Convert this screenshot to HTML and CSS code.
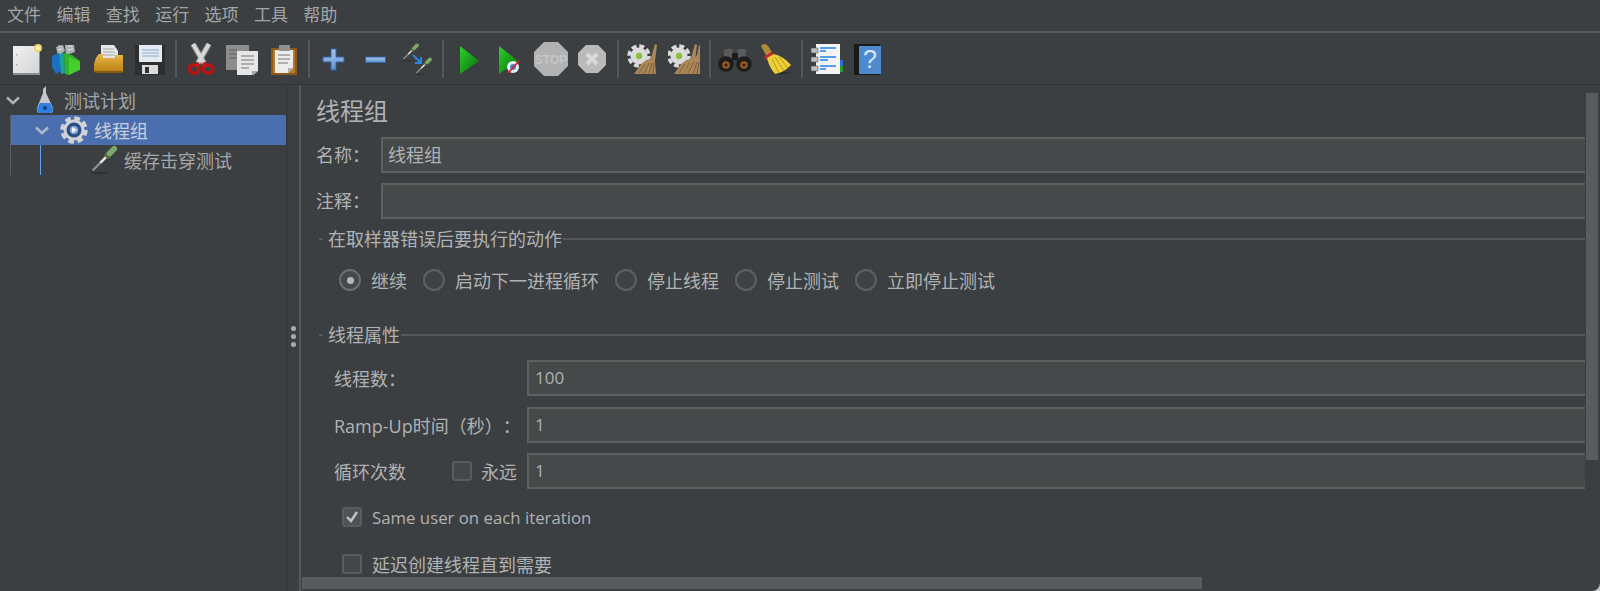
FILE: index.html
```html
<!DOCTYPE html>
<html lang="zh-CN">
<head>
    <meta charset="UTF-8">
    <meta name="viewport" content="width=device-width, initial-scale=1.0">
    <title>线程组</title>
    <link rel="stylesheet" href="styles.css">
</head>
<body>
    <svg class="defs" width="0" height="0">
        <defs>
            <linearGradient id="playFill" x1="0" y1="0" x2="1" y2="1">
                <stop offset="0" stop-color="#2fd02f"/>
                <stop offset="1" stop-color="#066f06"/>
            </linearGradient>
            <linearGradient id="folderFill" x1="0" y1="0" x2="0" y2="1">
                <stop offset="0" stop-color="#e8b84a"/>
                <stop offset="1" stop-color="#b87c10"/>
            </linearGradient>
            <linearGradient id="plusFill" x1="0" y1="0" x2="0" y2="1">
                <stop offset="0" stop-color="#a9c8ec"/>
                <stop offset="1" stop-color="#5f92d0"/>
            </linearGradient>
            <linearGradient id="pageFill" x1="0" y1="0" x2="1" y2="1">
                <stop offset="0" stop-color="#f2f2f2"/>
                <stop offset="1" stop-color="#d4d4d4"/>
            </linearGradient>
            <symbol id="dropper" viewBox="0 0 32 32">
                <ellipse cx="11" cy="30" rx="9" ry="1.4" fill="#2f3132"/>
                <path d="M3 28 L20 11" stroke="#3a3a3a" stroke-width="5"/>
                <path d="M4 27 L12 19" stroke="#8c8c8c" stroke-width="2.6"/>
                <path d="M12 19 L20 11" stroke="#e4e4e4" stroke-width="2.8"/>
                <path d="M18 13 L23 8" stroke="#4d6b3e" stroke-width="6.5"/>
                <path d="M22 9 L27 4" stroke="#7fa868" stroke-width="6" stroke-linecap="round"/>
            </symbol>
            <symbol id="broomGear" viewBox="0 0 32 32">
                <circle cx="12" cy="13" r="8.5" fill="#dcdcdc"/>
                <circle cx="12" cy="13" r="10" fill="none" stroke="#dcdcdc" stroke-width="3.5" stroke-dasharray="5 2.85"/>
                <circle cx="12" cy="13" r="3.2" fill="#8fc03f"/>
                <path d="M7 31 L15 20 L24 15 L28 1 L30 2 L28 18 L29 31 Z" fill="#ab8758"/>
                <path d="M12 30 L18 21 M17 31 L22 20 M22 31 L25 20 M26 31 L27 20" stroke="#7d5e38" stroke-width="1"/>
            </symbol>
        </defs>
    </svg>

    <div class="window">
        <nav class="menu-bar">
            <span class="menu-item">文件</span>
            <span class="menu-item">编辑</span>
            <span class="menu-item">查找</span>
            <span class="menu-item">运行</span>
            <span class="menu-item">选项</span>
            <span class="menu-item">工具</span>
            <span class="menu-item">帮助</span>
        </nav>

        <div class="toolbar">
            <!-- new -->
            <span class="tool"><svg viewBox="0 0 32 32" width="32" height="32">
                <rect x="3" y="3" width="27" height="29" fill="#8d8d8d"/>
                <rect x="3" y="3" width="26" height="27" fill="url(#pageFill)"/>
                <rect x="6" y="11" width="1.5" height="1.5" fill="#aaa"/><rect x="6" y="21" width="1.5" height="1.5" fill="#aaa"/>
                <circle cx="28" cy="5" r="4" fill="#e8d66a"/><circle cx="28" cy="5" r="2" fill="#fff6c0"/>
            </svg></span>
            <!-- templates -->
            <span class="tool"><svg viewBox="5 0 32 32" width="32" height="32">
                <path d="M10 4 l7 -2 2 6 -7 5 z M19 2 l9 0 1 7 -9 3 z" fill="#a9b4b8"/>
                <path d="M12 3 l3 0 M22 3 l4 0 M12 7 l4 -1 M22 7 l5 -1" stroke="#dfe5e8" stroke-width="1.2"/>
                <path d="M6 13 l7 -3 2 18 -5 3 -4 -7 z" fill="#1d6fc0"/>
                <path d="M13 11 l5 -1 1 20 -4 1 z" fill="#1aa0a0"/>
                <path d="M18 10 l8 2 8 6 0 9 -11 5 -4 -1 z" fill="#2fb52a"/>
                <path d="M23 14 l11 5 0 7 -11 6 z" fill="#48cf2e"/>
            </svg></span>
            <!-- open -->
            <span class="tool"><svg viewBox="0 0 32 32" width="32" height="32">
                <path d="M8 2 h13 l4 6 v8 H8 z" fill="#e6e6e6"/>
                <path d="M10 6 h11 M10 9 h12 M10 12 h12" stroke="#aaa" stroke-width="1"/>
                <path d="M1 21 Q3 13 6 11 h4 v4 h12 v-3 h8 v16 q0 2 -2 2 H4 q-3 0 -3 -3 z" fill="url(#folderFill)"/>
                <path d="M2 29 h27" stroke="#6e4f10" stroke-width="1.5"/>
            </svg></span>
            <!-- save -->
            <span class="tool"><svg viewBox="0 0 32 32" width="32" height="32">
                <rect x="1" y="2" width="30" height="30" fill="#2e2e2e"/>
                <rect x="5" y="2" width="23" height="17" fill="#e4eaf2"/>
                <path d="M8 7 h17 M8 10 h17 M8 13 h17" stroke="#8aa9c9" stroke-width="1.2"/>
                <rect x="8" y="22" width="16" height="9" fill="#dcdcdc"/>
                <rect x="11" y="24" width="4" height="6" fill="#333"/>
            </svg></span>
            <span class="tool-sep"></span>
            <!-- cut -->
            <span class="tool"><svg viewBox="0 0 32 32" width="32" height="32">
                <path d="M8 1 L19 20 M24 1 L13 20" stroke="#7d7d7d" stroke-width="6"/>
                <path d="M8 1 L19 20 M24 1 L13 20" stroke="#d6d6d6" stroke-width="4"/>
                <ellipse cx="9" cy="26" rx="5" ry="4" fill="none" stroke="#b81414" stroke-width="3.4"/>
                <ellipse cx="23" cy="26" rx="5" ry="4" fill="none" stroke="#b81414" stroke-width="3.4"/>
                <path d="M14 20 l-3 3 M18 20 l3 3" stroke="#c81818" stroke-width="3.4"/>
            </svg></span>
            <!-- copy -->
            <span class="tool"><svg viewBox="0 0 32 32" width="32" height="32">
                <rect x="0" y="2" width="23" height="25" fill="#8d8d8d"/>
                <path d="M3 7 h8 M3 11 h8 M3 15 h8" stroke="#6d6d6d" stroke-width="1.5"/>
                <path d="M11 8 h21 v20 l-6 5 H11 z" fill="#e6e6e6"/>
                <path d="M15 13 h13 M15 17 h13 M15 21 h13 M15 25 h8" stroke="#9c9c9c" stroke-width="1.5"/>
                <path d="M26 33 v-5 h6 z" fill="#a8a8a8"/>
            </svg></span>
            <!-- paste -->
            <span class="tool"><svg viewBox="0 0 32 32" width="32" height="32">
                <rect x="3" y="5" width="26" height="27" fill="#8a5a1c"/>
                <rect x="5" y="7" width="22" height="23" fill="#b77a2c"/>
                <path d="M7 7 h18 v18 l-5 5 H7 z" fill="#ececec"/>
                <rect x="11" y="2" width="11" height="6" fill="#8f8f8f"/>
                <path d="M10 12 h12 M10 16 h12 M10 20 h10" stroke="#9c9c9c" stroke-width="1.3"/>
                <path d="M20 30 v-5 h5 z" fill="#b2b2b2"/>
            </svg></span>
            <span class="tool-sep"></span>
            <!-- expand -->
            <span class="tool"><svg viewBox="0 0 32 32" width="32" height="32">
                <path d="M13 6 h5 v8 h8 v5 h-8 v8 h-5 v-8 h-8 v-5 h8 z" fill="url(#plusFill)" stroke="#3065a8" stroke-width="1"/>
            </svg></span>
            <!-- collapse -->
            <span class="tool"><svg viewBox="0 0 32 32" width="32" height="32">
                <rect x="5.5" y="14" width="20" height="5.5" fill="url(#plusFill)" stroke="#3065a8" stroke-width="1"/>
            </svg></span>
            <!-- toggle -->
            <span class="tool"><svg viewBox="0 0 32 32" width="32" height="32">
                <use href="#dropper" x="0" y="0" width="19" height="19"/>
                <use href="#dropper" x="13" y="14" width="19" height="19"/>
                <path d="M12 12 L20 20 M20 14 v6 h-6" stroke="#2a86e6" stroke-width="2" fill="none"/>
            </svg></span>
            <span class="tool-sep"></span>
            <!-- start -->
            <span class="tool"><svg viewBox="0 0 32 32" width="32" height="32">
                <path d="M8 3 L27 18 L8 31 z" fill="url(#playFill)"/>
            </svg></span>
            <!-- start no pauses -->
            <span class="tool"><svg viewBox="0 0 32 32" width="32" height="32">
                <path d="M6 3 L25 18 L6 31 z" fill="url(#playFill)"/>
                <circle cx="20" cy="24" r="6" fill="#e6eef8"/>
                <circle cx="20" cy="24" r="3" fill="#4a86cf"/>
                <path d="M15 30 L26 18" stroke="#e02020" stroke-width="1.8"/>
            </svg></span>
            <!-- stop -->
            <span class="tool"><svg viewBox="0 0 34 34" width="34" height="34">
                <path d="M10 0 h14 l10 10 v14 l-10 10 h-14 l-10 -10 v-14 z" fill="#b2b2b2"/>
                <text x="17" y="22" class="stop-label">STOP</text>
            </svg></span>
            <!-- shutdown -->
            <span class="tool"><svg viewBox="0 0 32 32" width="32" height="32">
                <path d="M10 2 h12 l8 8 v12 l-8 8 h-12 l-8 -8 v-12 z" fill="#bababa"/>
                <path d="M11 11 L21 21 M21 11 L11 21" stroke="#dadada" stroke-width="4"/>
            </svg></span>
            <span class="tool-sep"></span>
            <!-- clear -->
            <span class="tool"><svg width="32" height="32"><use href="#broomGear" width="32" height="32"/></svg></span>
            <!-- clear all -->
            <span class="tool"><svg viewBox="0 0 32 32" width="32" height="32">
                <use href="#broomGear" x="-1" width="32" height="32"/>
                <path d="M15 31 L24 18 L29 12 L31 2 L33 3 L32 18 L33 31 Z" fill="#ab8758"/>
                <path d="M20 30 L26 19 M25 31 L29 19 M29 31 L31 19" stroke="#7d5e38" stroke-width="1"/>
            </svg></span>
            <span class="tool-sep"></span>
            <!-- search -->
            <span class="tool"><svg viewBox="0 0 34 32" width="34" height="32">
                <rect x="6" y="6" width="9" height="9" rx="2" fill="#5a5a5a"/><rect x="19" y="6" width="9" height="9" rx="2" fill="#5a5a5a"/>
                <rect x="14" y="10" width="6" height="7" fill="#1b1b1b"/>
                <circle cx="8" cy="21" r="7.8" fill="#1d1d1d"/><circle cx="26" cy="21" r="7.8" fill="#1d1d1d"/>
                <circle cx="8" cy="22" r="3.8" fill="#9a5a26"/><circle cx="26" cy="22" r="3.8" fill="#9a5a26"/>
                <circle cx="8" cy="22" r="1.6" fill="#331a08"/><circle cx="26" cy="22" r="1.6" fill="#331a08"/>
            </svg></span>
            <!-- reset search -->
            <span class="tool"><svg viewBox="0 0 32 32" width="32" height="32">
                <ellipse cx="21" cy="30" rx="9" ry="1.5" fill="#2c2e2f"/>
                <path d="M1 3 Q4 -1 8 3 L13 11 L7 14 z" fill="#b38a3a"/>
                <path d="M5 15 L13 10" stroke="#c22828" stroke-width="3.5"/>
                <path d="M7 15 L14 11 Q23 13 31 22 Q25 29 15 31 Q9 24 7 15 z" fill="#ecce36"/>
                <path d="M12 16 L19 30 M15 14 L24 28 M19 14 L28 25" stroke="#b89a20" stroke-width="1"/>
            </svg></span>
            <span class="tool-sep"></span>
            <!-- log viewer -->
            <span class="tool"><svg viewBox="0 0 32 32" width="32" height="32">
                <rect x="27" y="17" width="5" height="6" fill="#2a6fd0"/><rect x="27" y="23" width="5" height="6" fill="#2a9a2a"/>
                <rect x="5" y="1" width="24" height="30" fill="#f4f4f4"/>
                <path d="M9 5 h16 M9 8 h6 M9 14 h16 M9 17 h8 M9 23 h16 M9 26 h6" stroke="#2080ee" stroke-width="1.6"/>
                <path d="M0 5 h7 v5 H0 z M0 14 h7 v5 H0 z M0 23 h7 v5 H0 z" fill="#bcbcbc" stroke="#555" stroke-width="0.6"/>
            </svg></span>
            <!-- help -->
            <span class="tool"><svg viewBox="0 0 32 32" width="32" height="32">
                <rect x="2" y="1" width="26" height="31" fill="#191919"/>
                <rect x="7" y="3" width="22" height="28" fill="#4f8ad0"/>
                <text x="18" y="25" class="help-label">?</text>
            </svg></span>
        </div>

        <div class="workspace">
            <aside class="tree">
                <span class="tree-guide"></span>
                <span class="tree-guide-blue"></span>
                <div class="tree-row">
                    <svg class="chevron" viewBox="0 0 14 9" width="14" height="9"><path d="M1 1.5 L7 7 L13 1.5" fill="none" stroke="#aeb0b2" stroke-width="2.4"/></svg>
                    <svg class="flask" viewBox="0 0 18 28" width="18" height="28">
                        <path d="M10 0 v7 l7 15 q1 5 -3 5 H4 q-4 0 -3 -5 L7 7 V3 z" fill="#c4c8cc"/>
                        <path d="M4 17 h10 l3 6 q0 4 -3 4 H4 q-3 0 -3 -4 z" fill="#2f7fe0"/>
                        <circle cx="9" cy="22" r="2" fill="#12407d"/>
                    </svg>
                    <span class="tree-label">测试计划</span>
                </div>
                <div class="tree-row tree-row-selected">
                    <svg class="chevron chevron-sub" viewBox="0 0 14 9" width="14" height="9"><path d="M1 1.5 L7 7 L13 1.5" fill="none" stroke="#b4bac4" stroke-width="2.4"/></svg>
                    <svg class="gear" viewBox="0 0 28 28" width="28" height="28">
                        <circle cx="14" cy="14" r="10.5" fill="#d0d2d4"/>
                        <circle cx="14" cy="14" r="11.5" fill="none" stroke="#d0d2d4" stroke-width="4.5" stroke-dasharray="5.5 3.53"/>
                        <circle cx="14" cy="14" r="7.5" fill="#2d4f86"/>
                        <circle cx="14" cy="14" r="4" fill="#8fb0dc"/>
                        <path d="M12 11 l5 3 -5 3 z" fill="#f2f5fa"/>
                    </svg>
                    <span class="tree-label">线程组</span>
                </div>
                <div class="tree-row">
                    <svg class="dropper" width="30" height="30"><use href="#dropper" width="30" height="30"/></svg>
                    <span class="tree-label">缓存击穿测试</span>
                </div>
            </aside>

            <div class="splitter">
                <span class="grip"></span><span class="grip"></span><span class="grip"></span>
            </div>

            <section class="right">
                <div class="right-top">
                    <main class="form">
                        <h1 class="form-title">线程组</h1>

                        <div class="field field-name">
                            <label class="field-label">名称：</label>
                            <div class="text-input">线程组</div>
                        </div>
                        <div class="field field-note">
                            <label class="field-label">注释：</label>
                            <div class="text-input"></div>
                        </div>

                        <div class="legend legend-error"><span>在取样器错误后要执行的动作</span></div>
                        <div class="radio-row">
                            <span class="radio radio-on"></span><span class="radio-text">继续</span>
                            <span class="radio"></span><span class="radio-text">启动下一进程循环</span>
                            <span class="radio"></span><span class="radio-text">停止线程</span>
                            <span class="radio"></span><span class="radio-text">停止测试</span>
                            <span class="radio"></span><span class="radio-text">立即停止测试</span>
                        </div>

                        <div class="legend legend-props"><span>线程属性</span></div>
                        <div class="prop prop-first">
                            <label class="prop-label">线程数：</label>
                            <div class="text-input text-input-num">100</div>
                        </div>
                        <div class="prop prop-second">
                            <label class="prop-label">Ramp-Up时间（秒）：</label>
                            <div class="text-input text-input-num">1</div>
                        </div>
                        <div class="prop prop-third">
                            <div class="prop-label">
                                <span class="loop-label">循环次数</span>
                                <span class="checkbox"></span>
                                <span class="forever-text">永远</span>
                            </div>
                            <div class="text-input text-input-num">1</div>
                        </div>

                        <div class="check-row check-row-first">
                            <span class="checkbox checkbox-on">
                                <svg viewBox="0 0 16 16" width="16" height="16"><path d="M3 8 L7 12 L13 3" fill="none" stroke="#c4c4c4" stroke-width="2.4"/></svg>
                            </span>
                            <span class="check-text check-text-latin">Same user on each iteration</span>
                        </div>
                        <div class="check-row check-row-second">
                            <span class="checkbox"></span>
                            <span class="check-text">延迟创建线程直到需要</span>
                        </div>
                    </main>
                    <div class="vscroll"><span class="vscroll-thumb"></span></div>
                </div>
                <div class="hscroll"><span class="hscroll-thumb"></span></div>
            </section>
        </div>
    </div>
</body>
</html>
```

FILE: styles.css
```css
* {
    box-sizing: border-box;
}

html, body {
    margin: 0;
    padding: 0;
    height: 100%;
}

body {
    background: #c9c9c9;
    overflow: hidden;
    font-family: "Open Sans", "Noto Sans CJK SC", sans-serif;
    font-size: 18px;
    color: #b0b2b4;
    text-spacing-trim: space-all;
}

.defs {
    position: absolute;
}

.window {
    width: 1600px;
    height: 591px;
    background: #3c3f41;
    border-bottom-right-radius: 8px;
    overflow: hidden;
    display: flex;
    flex-direction: column;
}

/* menu */
.menu-bar {
    height: 33px;
    flex: none;
    display: flex;
    align-items: center;
    padding: 0 0 2px 7px;
    border-bottom: 2px solid #56595b;
    color: #a4a6a8;
    font-size: 17px;
}

.menu-item {
    width: 49.4px;
    line-height: 24px;
}

/* toolbar */
.toolbar {
    height: 52px;
    flex: none;
    display: flex;
    align-items: center;
    padding-left: 5px;
    border-bottom: 1px solid #323537;
}

.tool {
    width: 41.5px;
    height: 36px;
    display: flex;
    align-items: center;
    justify-content: center;
}

.tool-sep {
    width: 2px;
    height: 38px;
    margin: 0 3.5px;
    background: #55585a;
}

.stop-label {
    font-family: "Liberation Sans", sans-serif;
    font-size: 12px;
    font-weight: bold;
    fill: #c6c6c6;
    text-anchor: middle;
}

.help-label {
    font-family: "Liberation Sans", sans-serif;
    font-size: 25px;
    fill: #d8e6f6;
    text-anchor: middle;
}

/* tree */
.workspace {
    flex: 1;
    display: flex;
    min-height: 0;
}

.tree {
    position: relative;
    width: 287px;
    flex: none;
    border-right: 1px solid #323537;
    color: #a4a6a8;
}

.tree-guide {
    position: absolute;
    left: 10px;
    top: 30px;
    width: 1px;
    height: 60px;
    background: #5a5d5f;
}

.tree-guide-blue {
    position: absolute;
    left: 40px;
    top: 60px;
    width: 1px;
    height: 30px;
    background: #5ea4ec;
}

.tree-row {
    height: 30px;
    display: flex;
    align-items: center;
    white-space: nowrap;
}

.tree-row-selected {
    margin-left: 11px;
    background: #4b6eaf;
    color: #c9d0dc;
}

.chevron {
    margin-left: 6px;
    flex: none;
}

.chevron-sub {
    margin-left: 24px;
}

.flask {
    margin-left: 16px;
}

.gear {
    margin-left: 11px;
}

.dropper {
    margin-left: 89px;
}

.tree-label {
    margin-left: 10px;
}

.tree-row-selected .tree-label {
    margin-left: 6px;
}

.tree-row:last-of-type .tree-label {
    margin-left: 5px;
}

/* splitter */
.splitter {
    width: 14px;
    flex: none;
    border-right: 2px solid #55585a;
    display: flex;
    flex-direction: column;
    align-items: center;
    padding-top: 241px;
    gap: 3px;
}

.grip {
    width: 5px;
    height: 5px;
    border-radius: 50%;
    background: #a9abad;
}

/* form area */
.right {
    flex: 1;
    min-width: 0;
    display: flex;
    flex-direction: column;
}

.right-top {
    flex: 1;
    min-height: 0;
    display: flex;
}

.form {
    flex: 1;
    min-width: 0;
    overflow: hidden;
    padding: 11px 0 0 15px;
}

.form-title {
    margin: 0;
    font-size: 24px;
    font-weight: 400;
    line-height: 30px;
    padding-bottom: 2px;
    color: #b0b2b4;
}

.field {
    display: flex;
    align-items: center;
    height: 36px;
}

.field-name {
    margin-top: 9px;
}

.field-note {
    margin-top: 10px;
}

.field-label {
    width: 65px;
    flex: none;
    padding-bottom: 2px;
}

/* runs on past the scroll bar, its right edge is not shown */
.text-input {
    flex: 1;
    height: 36px;
    margin-right: -3px;
    background: #45494a;
    border: 2px solid #5f6161;
    padding-left: 5px;
    line-height: 32px;
    color: #b0b2b4;
}

.text-input-num {
    padding-left: 6px;
    font-size: 17px;
}

.legend {
    display: flex;
    align-items: center;
    height: 24px;
    line-height: 24px;
    white-space: nowrap;
}

.legend::before {
    content: "";
    width: 4px;
    height: 2px;
    margin: 0 5px 0 3px;
    background: #55585a;
}

.legend::after {
    content: "";
    flex: 1;
    height: 2px;
    margin-left: 1px;
    background: #55585a;
}

.legend-error {
    margin-top: 8px;
}

.legend-props {
    margin-top: 31px;
}

.radio-row {
    display: flex;
    align-items: center;
    height: 24px;
    margin-top: 17px;
    padding-left: 23px;
}

.radio {
    width: 22px;
    height: 22px;
    flex: none;
    border-radius: 50%;
    border: 2px solid #5f6161;
    background: #404345;
    display: flex;
    align-items: center;
    justify-content: center;
}

.radio-on {
    border-color: #6c6e70;
    background: #45494a;
}

.radio-on::after {
    content: "";
    width: 7px;
    height: 7px;
    border-radius: 50%;
    background: #b8b8b8;
}

.radio-text {
    margin: 0 16px 0 10px;
}

.prop {
    display: flex;
    align-items: center;
    height: 36px;
    padding-left: 18px;
}

.prop-first {
    margin-top: 13px;
}

.prop-second {
    margin-top: 11px;
}

.prop-third {
    margin-top: 10px;
}

.prop-label {
    width: 193px;
    flex: none;
    display: flex;
    align-items: center;
    white-space: nowrap;
}

.loop-label {
    width: 118px;
}

.forever-text {
    margin-left: 9px;
}

.checkbox {
    width: 20px;
    height: 20px;
    flex: none;
    border: 2px solid #5a5d5e;
    border-radius: 3px;
    background: #43474a;
    display: flex;
    align-items: center;
    justify-content: center;
}

.checkbox-on {
    background: #4f5254;
}

.check-row {
    display: flex;
    align-items: center;
    height: 24px;
    padding-left: 26px;
    white-space: nowrap;
}

.check-row-first {
    margin-top: 16px;
}

.check-row-second {
    margin-top: 23px;
}

.check-text {
    margin-left: 10px;
}

.check-text-latin {
    font-size: 16.8px;
}

/* scrollbars */
.vscroll {
    width: 15px;
    flex: none;
    padding: 8px 2px 0 1px;
    position: relative;
}

.vscroll-thumb {
    display: block;
    height: 367px;
    background: #595b5d;
}

.hscroll {
    height: 14px;
    flex: none;
}

.hscroll-thumb {
    display: block;
    width: 900px;
    height: 12px;
    margin-left: 1px;
    background: #595b5d;
}
```
